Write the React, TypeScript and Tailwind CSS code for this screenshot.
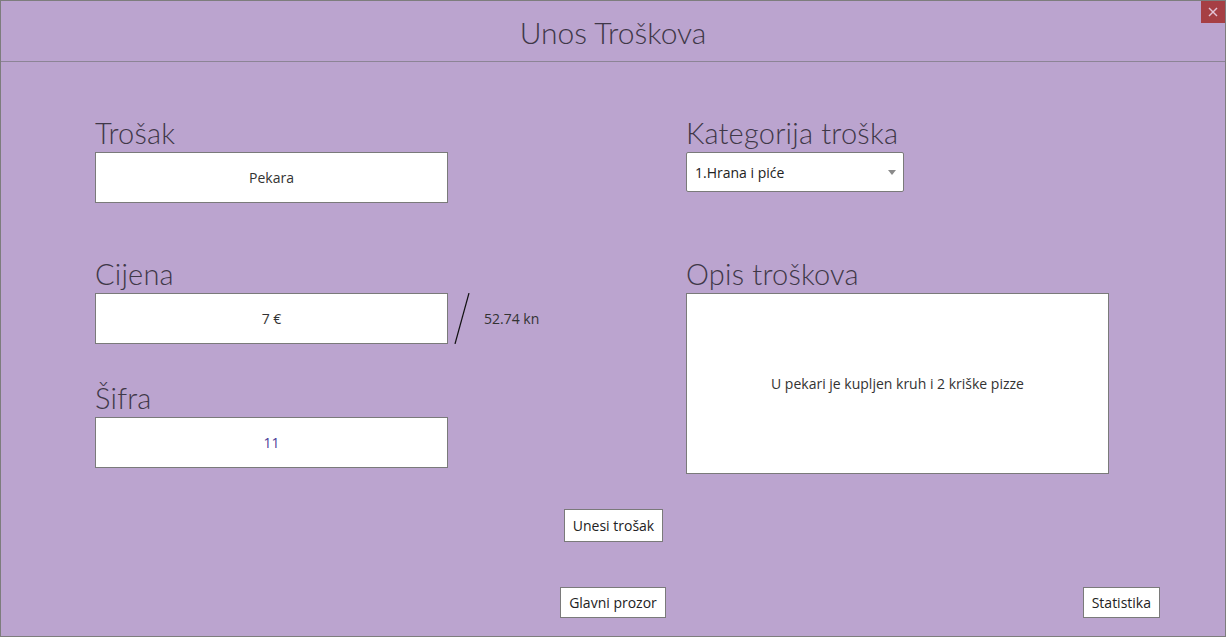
import React from 'react'

const label = "h-[32px] text-[29px] leading-[26px] font-light text-[#3f3848] tracking-[0.2px] font-['Lato',sans-serif]"
const field = "bg-white border border-[#7a7a7a] flex items-center justify-center text-[14px]"
const btn = "bg-white border border-[#7a7a7a] px-[8px] text-[14px] text-[#222] leading-none flex items-center"

export default function App() {
  return (
    <div className="w-[1226px] h-[637px] bg-[#bba4cf] border border-[#7d7d7d] flex flex-col relative font-['Lato','Open_Sans',sans-serif] overflow-hidden">
      {/* close */}
      <div className="absolute top-0 right-0 w-[24px] h-[22px] bg-[#a63f44] flex items-center justify-center">
        <svg width="10" height="10" viewBox="0 0 10 10" stroke="#e3c4d6" strokeWidth="1.4">
          <line x1="1" y1="1" x2="9" y2="9" />
          <line x1="9" y1="1" x2="1" y2="9" />
        </svg>
      </div>

      {/* header */}
      <div className="h-[61px] border-b border-[#8c8496] flex items-center justify-center pt-[3px]">
        <h1 className="text-[30px] font-light text-[#3f3848]">Unos Troškova</h1>
      </div>

      <div className="flex pl-[94px] pt-[58px] font-['Open_Sans',sans-serif]">
        {/* left */}
        <div className="flex flex-col w-[591px]">
          <div className={label}>Trošak</div>
          <div className={`${field} text-[#333] w-[353px] h-[51px]`}>Pekara</div>

          <div className={`${label} mt-[58px]`}>Cijena</div>
          <div className="flex items-center">
            <div className={`${field} text-[#333] w-[353px] h-[51px]`}>7 €</div>
            <svg width="20" height="51" viewBox="0 0 20 51" className="ml-[5px]">
              <line x1="16" y1="0" x2="2" y2="51" stroke="#111" strokeWidth="1.2" />
            </svg>
            <span className="ml-[11px] text-[14px] text-[#333]">52.74 kn</span>
          </div>

          <div className={`${label} mt-[41px]`}>Šifra</div>
          <div className={`${field} text-[#4a3a98] w-[353px] h-[51px]`}>11</div>
        </div>

        {/* right */}
        <div className="flex flex-col">
          <div className={label}>Kategorija troška</div>
          <div className="w-[218px] h-[40px] bg-white border border-[#7a7a7a] rounded-[2px] flex items-center justify-between pl-[8px] pr-[7px] text-[14px] text-[#222]">
            <span>1.Hrana i piće</span>
            <svg width="8" height="5" viewBox="0 0 8 5"><path d="M0 0h8L4 5z" fill="#8a8a8a" /></svg>
          </div>

          <div className={`${label} mt-[69px]`}>Opis troškova</div>
          <div className={`${field} text-[#333] w-[423px] h-[181px]`}>U pekari je kupljen kruh i 2 kriške pizze</div>
        </div>
      </div>

      <div className="flex justify-center mt-[35px] font-['Open_Sans',sans-serif]">
        <button className={`${btn} h-[33px] ml-[1px]`}>Unesi trošak</button>
      </div>

      <div className="grid grid-cols-[1fr_auto_1fr] mt-[45px] font-['Open_Sans',sans-serif]">
        <div />
        <button className={`${btn} h-[31px]`}>Glavni prozor</button>
        <div className="flex justify-end pr-[65px]">
          <button className={`${btn} h-[31px]`}>Statistika</button>
        </div>
      </div>
    </div>
  )
}
